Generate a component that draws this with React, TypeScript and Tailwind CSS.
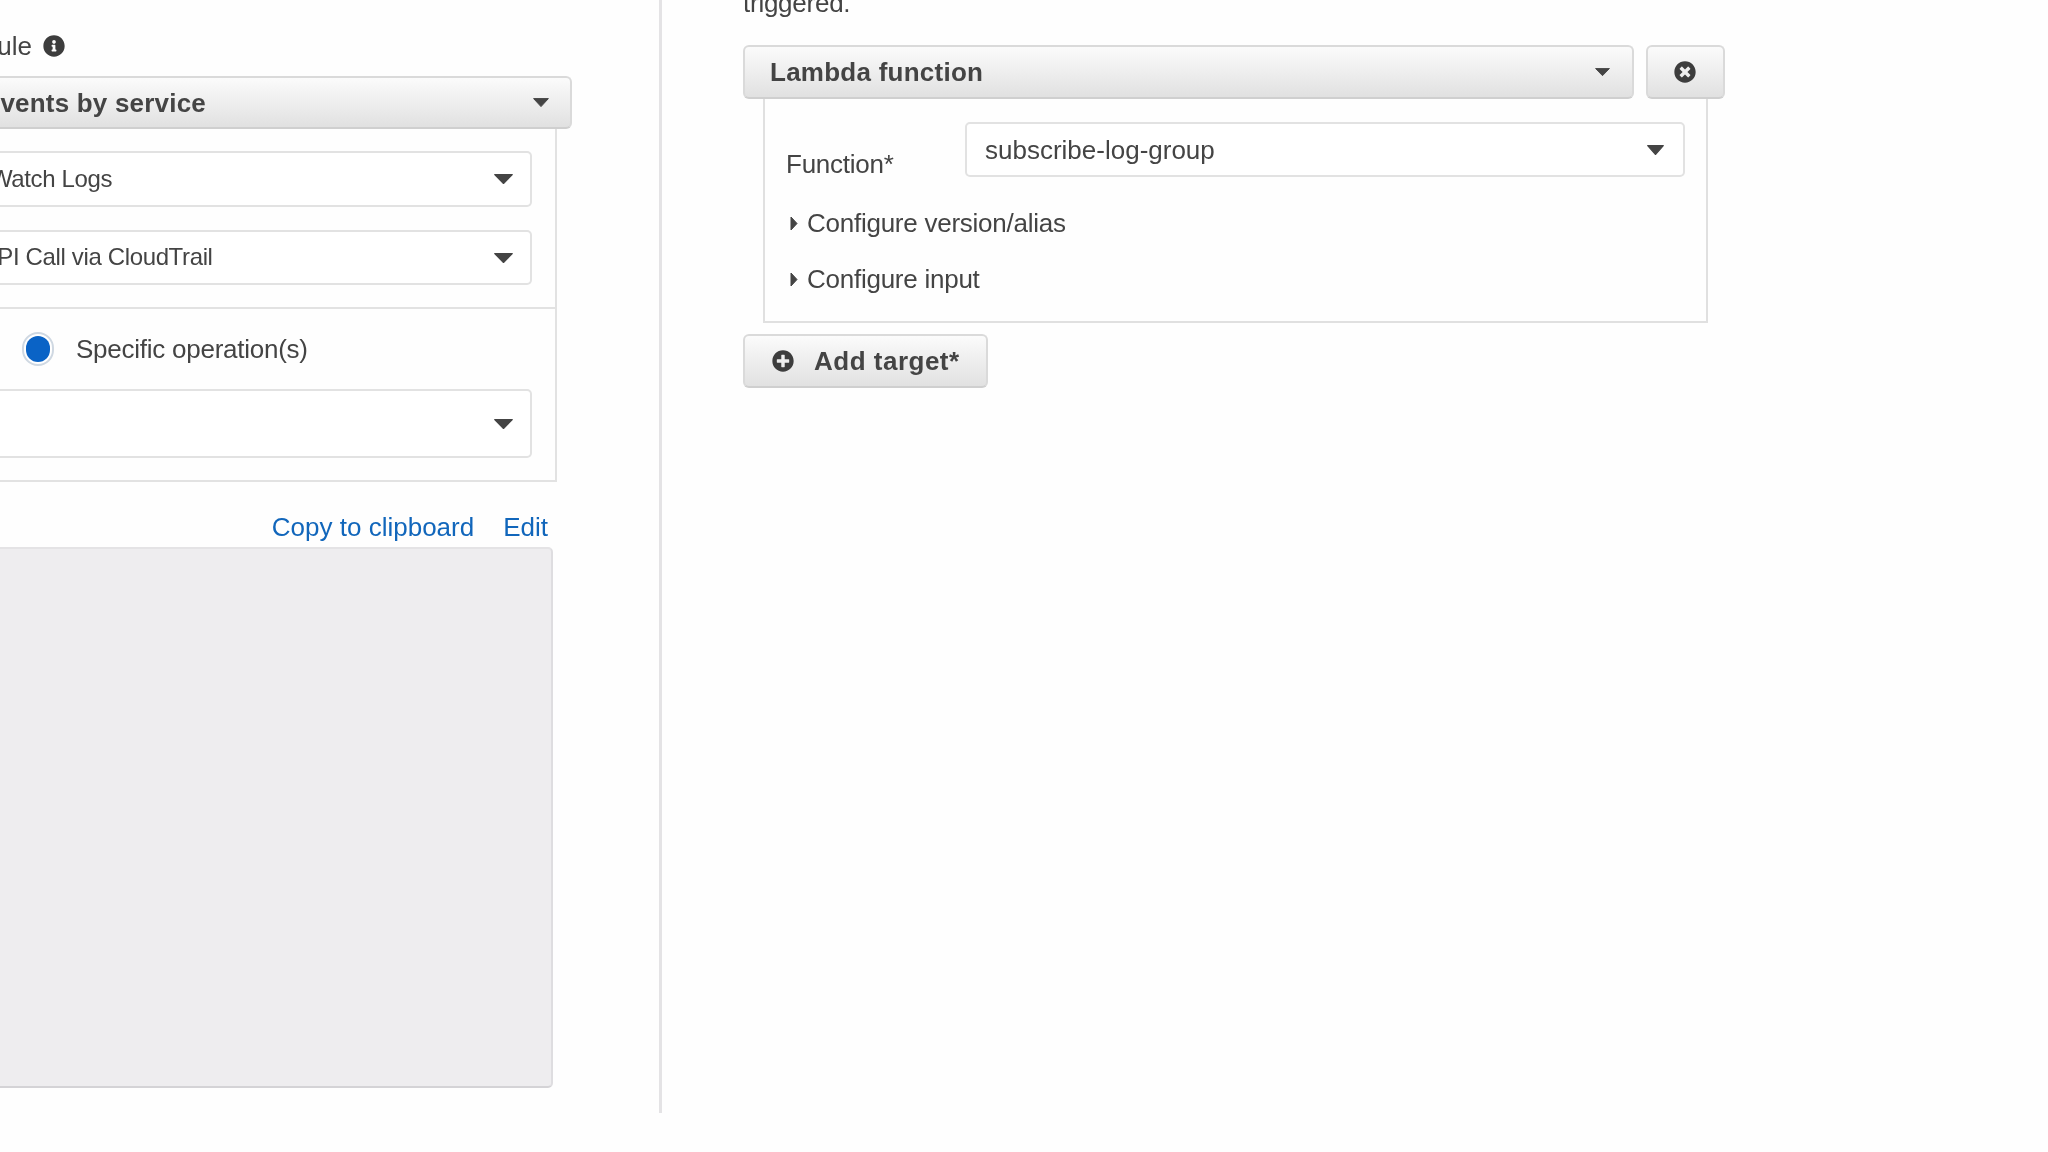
import { FaInfoCircle, FaPlusCircle, FaTimesCircle } from 'react-icons/fa';

const Caret = ({ w, h }: { w: number; h: number }) => (
  <svg width={w} height={h} viewBox="0 0 16 9" preserveAspectRatio="none" className="shrink-0 text-[#444]">
    <path d="M0.6 0.6 H15.4 L8 8.6 Z" fill="currentColor" stroke="currentColor" strokeWidth="1" strokeLinejoin="round" />
  </svg>
);

const GRAD = 'bg-gradient-to-b from-[#fbfbfb] to-[#e1e1e1] border-2 border-[#dadada] border-b-[#cfcfcf] rounded-[6px]';
const LEFT_SELECT = 'w-[532px] flex items-center bg-white border-2 border-l-0 border-[#e2e2e2] rounded-r-[5px] pr-[17px]';

export default function App() {
  return (
    <div className="w-[2048px] h-[1152px] overflow-hidden bg-[#fefefe] flex items-start text-[26px] text-[#444] leading-[30px] font-['Liberation_Sans',Arial,sans-serif] blur-[0.6px]">
      {/* left column */}
      <div className="flex-none w-[662px] h-[1113px] border-r-[3px] border-[#e4e3e5] pt-[31px]">
        <div className="w-[65px] h-[30px] flex items-center justify-end gap-[11px]">
          <span className="whitespace-nowrap">Event rule</span>
          <FaInfoCircle size={22} className="shrink-0 text-[#3d3d3d]" />
        </div>

        <div className={`mt-[15px] w-[572px] h-[53px] flex items-center justify-end pr-[21px] border-l-0 rounded-l-none ${GRAD}`}>
          <span className="whitespace-nowrap font-bold tracking-[0.2px]">Build event pattern to match events by service</span>
          <span className="ml-[327px]"><Caret w={16} h={9} /></span>
        </div>

        <div className="w-[557px] h-[353px] border-r-2 border-b-2 border-[#e2e2e2]">
          <div className="h-[180px] pt-[22px] border-b-2 border-[#e2e2e2] text-[24px] tracking-[-0.36px]">
            <div className={`h-[56px] ${LEFT_SELECT}`}>
              <span className="whitespace-nowrap ml-[-71px]">CloudWatch Logs</span>
              <span className="ml-auto"><Caret w={19} h={10} /></span>
            </div>
            <div className={`h-[55px] mt-[23px] ${LEFT_SELECT}`}>
              <span className="whitespace-nowrap ml-[-76px] -mt-[1px]">AWS API Call via CloudTrail</span>
              <span className="ml-auto"><Caret w={19} h={10} /></span>
            </div>
          </div>
          <div className="h-[80px] flex items-center pl-[22px]">
            <span className="w-[32px] h-[34px] rounded-full border-2 border-[#cfd8e2] bg-white flex items-center justify-center">
              <span className="w-[24px] h-[26px] rounded-full bg-[#0a63c6]" />
            </span>
            <span className="ml-[22px] whitespace-nowrap tracking-[-0.25px]">Specific operation(s)</span>
          </div>
          <div className={`h-[69px] ${LEFT_SELECT}`}>
            <span className="ml-auto"><Caret w={19} h={10} /></span>
          </div>
        </div>

        <div className="mt-[30px] w-[548px] h-[30px] flex justify-end gap-[29px] text-[#1166bb]">
          <span className="whitespace-nowrap">Copy to clipboard</span>
          <span>Edit</span>
        </div>

        <div className="mt-[5px] w-[553px] h-[541px] bg-[#eeedef] border-t-2 border-r-2 border-b-2 border-t-[#e4e3e5] border-r-[#dedde0] border-b-[#d4d3d6] rounded-r-[5px]" />
      </div>

      {/* right column */}
      <div className="flex-none pl-[81px] -mt-[12px] text-[#444]">
        <div className="h-[30px] tracking-[-0.25px]">triggered.</div>

        <div className="mt-[27px] flex gap-[12px]">
          <div className={`w-[891px] h-[54px] flex items-center pl-[25px] pr-[22px] ${GRAD}`}>
            <span className="font-bold tracking-[0.25px]">Lambda function</span>
            <span className="ml-auto"><Caret w={15} h={8} /></span>
          </div>
          <div className={`w-[79px] h-[54px] flex items-center justify-center pr-[2px] ${GRAD}`}>
            <FaTimesCircle size={22} className="text-[#3d3d3d]" />
          </div>
        </div>

        <div className="ml-[20px] w-[945px] h-[224px] border-2 border-t-0 border-[#e0e0e0] pt-[23px] tracking-[-0.25px]">
          <div className="flex">
            <span className="ml-[21px] w-[179px] mt-[27px] whitespace-nowrap">Function*</span>
            <div className="w-[720px] h-[55px] flex items-center pl-[18px] pr-[19px] bg-white border-2 border-[#e2e2e2] rounded-[5px] tracking-normal">
              <span>subscribe-log-group</span>
              <span className="ml-auto"><Caret w={17} h={10} /></span>
            </div>
          </div>
          <div className="ml-[25px] mt-[29px] h-[30px] flex items-center gap-[9px]">
            <svg width="8" height="15" viewBox="0 0 8 15" className="shrink-0"><path d="M1 1 L7 7.5 L1 14 Z" fill="#444" stroke="#444" strokeLinejoin="round" /></svg>
            <span className="whitespace-nowrap">Configure version/alias</span>
          </div>
          <div className="ml-[25px] mt-[26px] h-[30px] flex items-center gap-[9px]">
            <svg width="8" height="15" viewBox="0 0 8 15" className="shrink-0"><path d="M1 1 L7 7.5 L1 14 Z" fill="#444" stroke="#444" strokeLinejoin="round" /></svg>
            <span className="whitespace-nowrap">Configure input</span>
          </div>
        </div>

        <div className={`mt-[11px] w-[245px] h-[54px] flex items-center pl-[27px] gap-[20px] ${GRAD}`}>
          <FaPlusCircle size={22} className="shrink-0 text-[#3d3d3d]" />
          <span className="font-bold whitespace-nowrap tracking-[0.5px]">Add target*</span>
        </div>
      </div>
    </div>
  );
}
